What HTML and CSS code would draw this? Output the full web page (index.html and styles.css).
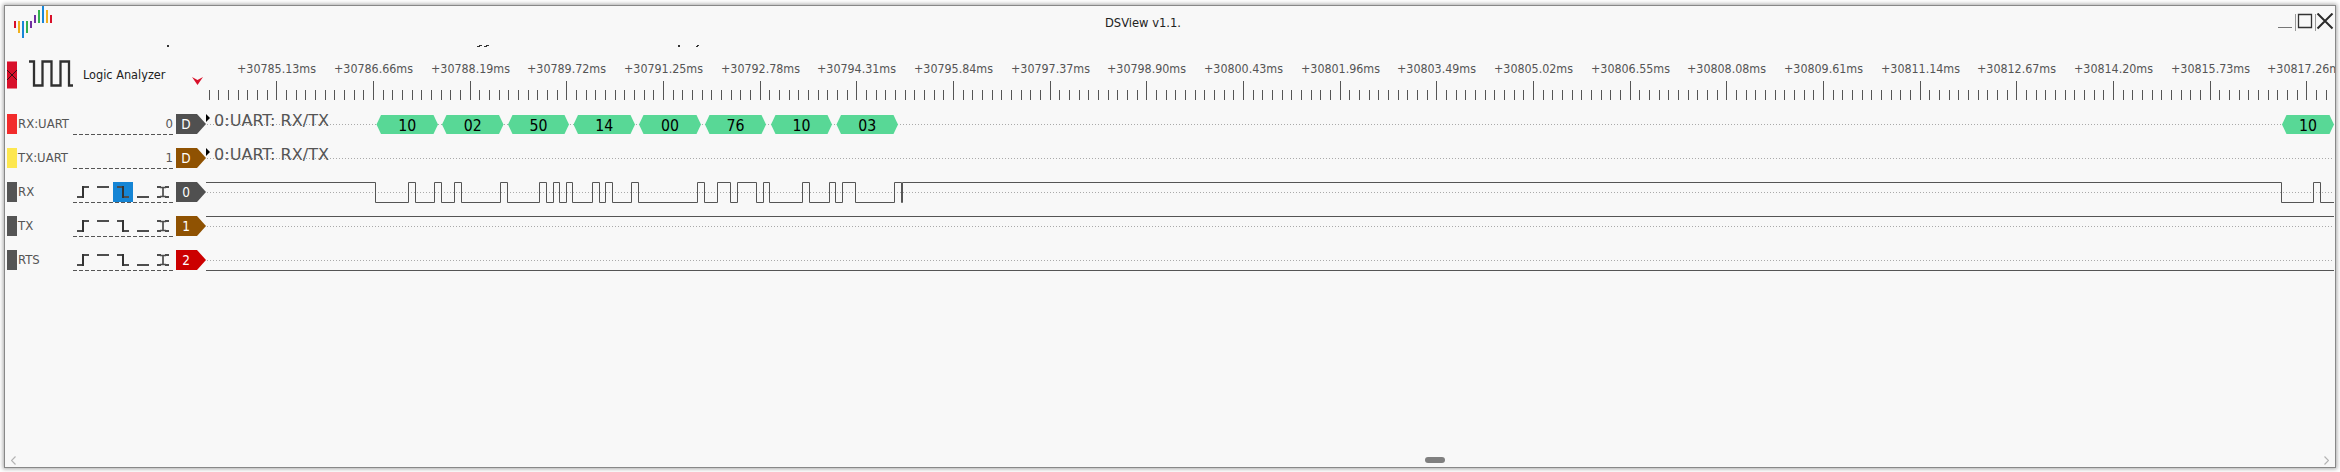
FILE: index.html
```
<!DOCTYPE html>
<html lang="en">
<head>
<meta charset="utf-8">
<title>DSView</title>
<link rel="stylesheet" href="styles.css">
</head>
<body>
<main class="window">
  <header class="titlebar">
    <svg class="logo" width="40" height="34" viewBox="0 0 40 34">
      <path fill="#d8102a" d="M1 15h2v7h-2zM37 9h2v8h-2z"/>
      <path fill="#f0b01e" d="M5 15h2v12h-2zM33 4h2v13h-2z"/>
      <path fill="#1787d8" d="M9 15h2v17h-2zM29 0h2v17h-2z"/>
      <path fill="#33b050" d="M13 15h2v12h-2zM25 4h2v13h-2z"/>
      <path fill="#7030a0" d="M17 15h2v7h-2zM21 9h2v8h-2z"/>
    </svg>
    <span class="title">DSView v1.1.</span>
    <svg class="controls" width="58" height="20" viewBox="0 0 58 20" fill="none">
      <path d="M2 14.500h14" stroke="#777"/>
      <path d="M19.5 1v17M39.5 1v17" stroke="#999"/>
      <path d="M22.5 1.500h13v13h-13z" stroke="#333" stroke-width="1.3"/>
      <path d="M41.5.5l15 15M56.5.5l-15 15" stroke="#2c2c2c" stroke-width="2"/>
    </svg>
  </header>
  <svg class="clipped" width="2330" height="4" viewBox="0 0 2330 4" fill="#333">
    <path d="M162 1h2v2h-2zM472 2h3v1h-3zM474 1h3v1h-3zM479 2h3v1h-3zM481 1h3v1h-3zM673 1h2v2h-2zM691 2h2v1h-2zM692 1h2v1h-2z"/>
  </svg>
  <section class="header">
    <svg class="device" width="70" height="30" viewBox="0 0 70 30" fill="none">
      <path fill="#d8102a" d="M0 2h10v26h-10z"/>
      <path fill="#e9808e" d="M0 1h10v1h-10zM0 28h10v1h-10z"/>
      <path stroke="#3a1015" d="M0 10l10 10M10 10l-10 10"/>
      <path stroke="#303030" stroke-width="2.3" d="M22 1.5h5v24h8.5v-24h9v24h9v-24h8.500v24h4"/>
    </svg>
    <span class="device-name">Logic Analyzer</span>
    <svg class="marker" width="11" height="8" viewBox="0 0 11 8"><path fill="#d8102a" d="M0 0l5.500 3 5.500-3-5.500 8z"/></svg>
    <svg class="ruler" id="ruler" width="2129" height="58" viewBox="0 0 2129 58"></svg>
  </section>
  <section class="channels" id="channels"></section>
  <footer class="scrollbar">
    <svg width="5" height="9" viewBox="0 0 5 9"><path d="M4.500.5l-4 4 4 4" fill="none" stroke="#b4b4b4" stroke-width="1.200"/></svg>
    <span class="thumb"></span>
    <svg width="5" height="9" viewBox="0 0 5 9"><path d="M.5.5l4 4-4 4" fill="none" stroke="#b4b4b4" stroke-width="1.200"/></svg>
  </footer>
</main>
<script src="app.js"></script>
</body>
</html>
```
FILE: styles.css
```
body {
  display: flow-root;
  height: 472px;
  overflow: hidden;
  margin: 0;
  background: #fff;
  font-family: "DejaVu Sans Condensed", "DejaVu Sans", sans-serif;
  font-stretch: condensed;
  font-size: 13px;
  color: #555;
}
.window {
  display: flex;
  flex-direction: column;
  box-sizing: border-box;
  width: 2332px;
  height: 463px;
  margin: 5px 4px 4px;
  border: 1px solid #888;
  background: #f8f8f8;
  box-shadow: 0 0 4px 1px #aaa;
}
.titlebar {
  display: flex;
  justify-content: space-between;
  height: 38px;
  color: #222;
}
.logo { margin-left: 8px; }
.title {
  width: 76px;
  margin: 9px 43px 0 0;
  font-size: 12.800px;
  line-height: 16px;
  white-space: nowrap;
}
.controls { margin: 7px 1px 0 0; }
.clipped { display: block; flex: none; }
.header { display: flex; height: 59px; }
.device { flex: none; margin: 12px 0 0 2px; }
.device-name {
  width: 109px;
  margin: 19px 0 0 6px;
  font-size: 12.600px;
  line-height: 16px;
  color: #222;
  white-space: nowrap;
}
.marker { flex: none; margin: 29px 2px 0 0; }
.ruler { flex: none; margin-left: 1px; }
.ruler text { font-size: 13px; fill: #555; }
.row { display: flex; height: 34px; }
.swatch { width: 10px; height: 20px; margin: 7px 0 0 2px; }
.name { width: 55px; margin: 8px 0 0 1px; line-height: 18px; white-space: nowrap; }
.triggers {
  width: 100px;
  height: 21px;
  margin-top: 7px;
  text-align: right;
  line-height: 20px;
  background: repeating-linear-gradient(90deg, #555 0 4px, transparent 4px 6px) 0 100% / 100% 1px no-repeat;
}
.triggers svg { display: block; }
.tag {
  width: 20px;
  height: 20px;
  margin: 7px 0 0 3px;
  padding-right: 10px;
  font-size: 13.500px;
  line-height: 20px;
  text-align: center;
  color: #fff;
  clip-path: polygon(0 0, 21px 0, 30px 10px, 21px 20px, 0 20px);
}
.wave { flex: none; }
.wave .decoder { font-size: 16.500px; fill: #555; }
.wave .byte { font-size: 16.500px; fill: #000; text-anchor: middle; }
.channels { flex: 1; }
.scrollbar {
  display: flex;
  justify-content: space-between;
  padding: 0 6px 2px;
  height: 9px;
}
.thumb {
  width: 20px;
  height: 6px;
  margin: 1px 0 0 529px;
  border-radius: 3px;
  background: #808080;
}
```
FILE: app.js
```
const X0 = 206;
const WIDTH = 2129;

// Time ruler
let ruler = '';
for (let i = -7; i < 213; i++) {
  const x = Math.floor(276.9 + i * 290 / 30) - X0 + 0.5;
  const major = i % 10 === 0;
  ruler += `<path stroke="#555" d="M${x} ${major ? 33 : 42}V52"/>`;
  if (major) {
    const t = (30785.13 + i / 10 * 1.53).toFixed(2);
    ruler += `<text x="${x - 39.5}" y="25" textLength="79" lengthAdjust="spacingAndGlyphs">+${t}ms</text>`;
  }
}
document.getElementById('ruler').innerHTML = ruler;

// Trigger choices: rising, high, falling, low, either edge
function triggerIcons(selected) {
  return `<svg width="100" height="20" viewBox="0 0 100 20" fill="none" stroke="#4d4d4d" stroke-width="2">
    ${selected ? '<path d="M40 0h20v20h-20z" fill="#1585d5" stroke="none"/>' : ''}
    <path d="M4 15h7M9 5h7M24 5h12M44 5h7M49 15h7M64 15h12M84 5h4M92 5h4M84 15h4M92 15h4"/>
    <path d="M10 4v12M50 4v12" stroke="#333"/>
    <path d="M90 6v8M87 5.500h6M87 14.500h6" stroke-width="1.700"/>
  </svg>`;
}

const edges = [375, 408, 415, 434, 441, 454, 461, 500, 507, 539, 546, 553, 559, 566, 572,
  592, 599, 605, 612, 631, 638, 697, 704, 717, 730, 737, 756, 763, 769, 802, 809, 829, 835,
  842, 855, 894, 901, 902, 2281, 2313, 2320];

function pulses() {
  let d = 'M0 15.5';
  let high = true;
  for (const e of edges) {
    high = !high;
    d += `H${e - X0 + 0.5}V${high ? 15.5 : 35.5}`;
  }
  return d + 'H2128';
}

const bytes = [[376.5, 438, '10'], [442, 503.5, '02'], [508, 569, '50'], [573.5, 635, '14'],
  [639, 701, '00'], [705, 766, '76'], [771, 832, '10'], [836.5, 898, '03'], [2282, 2334, '10']];

function packets() {
  return bytes.map(([a, b, label]) => {
    const l = a - X0, r = b - X0;
    return `<path fill="#58d896" d="M${l} 17.500L${l + 4.5} 8H${r - 4.5}L${r} 17.500L${r - 4.5} 27H${l + 4.5}z"/>
      <text class="byte" x="${(l + r) / 2}" y="23.500" textLength="18" lengthAdjust="spacingAndGlyphs">${label}</text>`;
  }).join('');
}

const decoderText = '<path fill="#000" d="M0 7l4 4-4 4z"/><text class="decoder" x="8" y="19" textLength="115" lengthAdjust="spacingAndGlyphs">0:UART: RX/TX</text>';
const line = 'fill="none" stroke="#555"';
const channels = [
  { name: 'RX:UART', color: '#f22c2c', index: '0', tag: 'D', tagColor: '#505050', wave: decoderText + packets() },
  { name: 'TX:UART', color: '#fde74f', index: '1', tag: 'D', tagColor: '#8f5202', wave: decoderText },
  { name: 'RX', color: '#555', selected: true, tag: '0', tagColor: '#505050', wave: `<path ${line} d="${pulses()}"/>`, shift: -8 },
  { name: 'TX', color: '#555', tag: '1', tagColor: '#8f5202', wave: `<path ${line} d="M0 7.500H2128"/>` },
  { name: 'RTS', color: '#555', tag: '2', tagColor: '#cc0000', wave: `<path ${line} d="M0 27.500H2128"/>` }
];

document.getElementById('channels').innerHTML = channels.map(c => `
  <div class="row">
    <span class="swatch" style="background:${c.color}"></span>
    <span class="name">${c.name}</span>
    <div class="triggers">${c.index || triggerIcons(c.selected)}</div>
    <span class="tag" style="background:${c.tagColor}">${c.tag}</span>
    <svg class="wave" width="${WIDTH}" height="34" viewBox="0 0 ${WIDTH} 34">
      <path d="M1 17.500H2128" stroke="#aaa" stroke-dasharray="1 2"/>
      <g transform="translate(0 ${c.shift || 0})">${c.wave}</g>
    </svg>
  </div>`).join('');
```
